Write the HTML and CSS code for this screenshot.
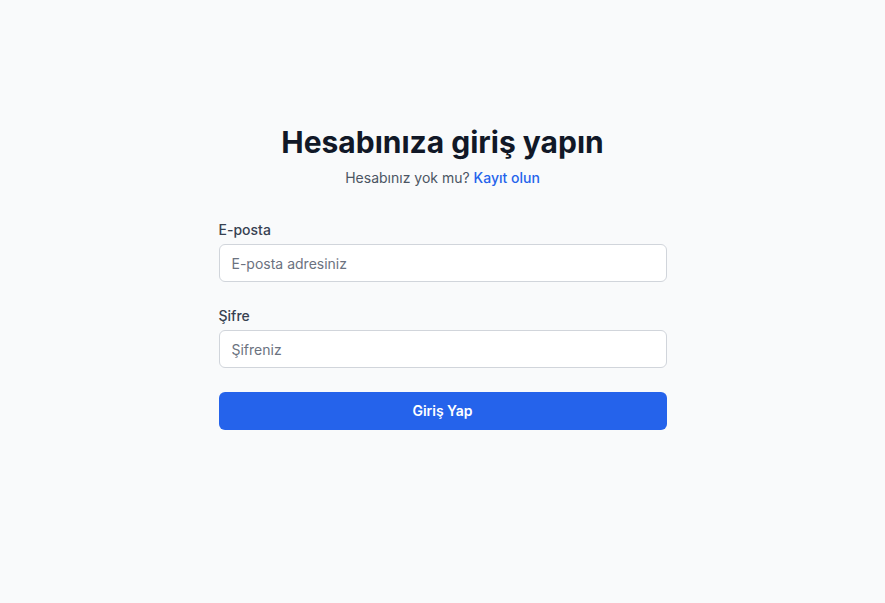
FILE: index.html
```html
<!DOCTYPE html>
<html lang="tr">
<head>
<meta charset="utf-8">
<title>Giriş</title>
<link rel="stylesheet" href="styles.css">
</head>
<body>
<main class="page">
  <div class="card">
    <h1 class="title">Hesabınıza giriş yapın</h1>
    <p class="subtitle">Hesabınız yok mu? <a href="#" class="link">Kayıt olun</a></p>
    <form class="form">
      <div class="field">
        <label class="label" for="email">E-posta</label>
        <input class="input" id="email" type="email" placeholder="E-posta adresiniz">
      </div>
      <div class="field">
        <label class="label" for="password">Şifre</label>
        <input class="input" id="password" type="password" placeholder="Şifreniz">
      </div>
      <button class="button" type="button">Giriş Yap</button>
    </form>
  </div>
</main>
</body>
</html>
```
FILE: styles.css
```css
* { box-sizing: border-box; }
html, body {
  margin: 0;
  padding: 0;
  background: #f9fafb;
  font-family: Inter, "Noto Sans", sans-serif;
  color: #111827;
}
.page {
  min-height: 603px;
  display: flex;
  justify-content: center;
  padding-top: 124px;
}
.card {
  width: 448px;
}
.title {
  margin: 0;
  font-size: 30px;
  line-height: 36px;
  font-weight: 700;
  text-align: center;
  color: #111827;
}
.subtitle {
  margin: 8px 0 0;
  font-size: 14px;
  line-height: 20px;
  text-align: center;
  color: #4b5563;
}
.link {
  color: #2563eb;
  font-weight: 500;
  text-decoration: none;
}
.form {
  margin-top: 32px;
  display: flex;
  flex-direction: column;
  gap: 24px;
}
.field {
  display: flex;
  flex-direction: column;
  gap: 4px;
}
.label {
  font-size: 14px;
  line-height: 20px;
  font-weight: 500;
  color: #374151;
}
.input {
  width: 100%;
  height: 38px;
  padding: 8px 12px;
  font-family: inherit;
  font-size: 14px;
  line-height: 20px;
  color: #111827;
  background: #fff;
  border: 1px solid #d1d5db;
  border-radius: 6px;
  outline: none;
}
.input::placeholder { color: #6b7280; }
.button {
  width: 100%;
  height: 38px;
  border: none;
  border-radius: 6px;
  background: #2563eb;
  color: #fff;
  font-family: inherit;
  font-size: 14px;
  line-height: 20px;
  font-weight: 600;
  cursor: pointer;
}
```
